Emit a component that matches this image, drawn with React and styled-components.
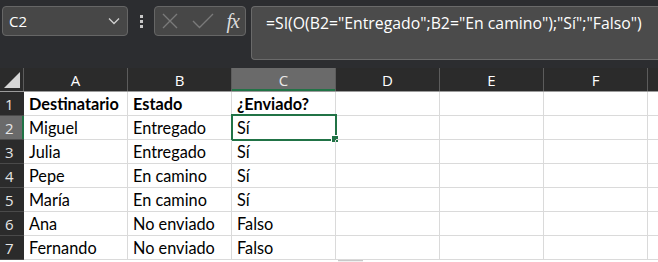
import React from 'react';
import styled, { createGlobalStyle } from 'styled-components';

const GlobalStyle = createGlobalStyle`
  html, body {
    margin: 0;
    padding: 0;
    background: #ffffff;
    overflow: hidden;
  }
`;

const Page = styled.div`
  width: 658px;
  height: 262px;
  overflow: hidden;
  font-family: 'Open Sans', 'Noto Sans', sans-serif;
`;

const Toolbar = styled.div`
  height: 68px;
  background: #2c2d30;
  display: flex;
  align-items: flex-start;
  padding: 6px 0 0 2px;
  box-sizing: border-box;
`;

const NameBox = styled.div`
  width: 126px;
  height: 30px;
  box-sizing: border-box;
  border: 1px solid #666;
  border-radius: 4px;
  background: #474747;
  display: flex;
  align-items: center;
  justify-content: space-between;
  padding: 0 7px 0 6px;
  color: #fff;
  font-size: 15px;
`;

const Dots = styled.div`
  width: 26px;
  height: 30px;
  display: flex;
  flex-direction: column;
  align-items: center;
  justify-content: center;
  gap: 2px;
  span {
    width: 3px;
    height: 3px;
    background: #c8c8c8;
  }
`;

const FxBox = styled.div`
  width: 92px;
  height: 30px;
  box-sizing: border-box;
  border: 1px solid #666;
  border-radius: 4px;
  background: #474747;
  display: flex;
  align-items: center;
  justify-content: space-between;
  padding: 0 4px 0 6px;
  margin-right: 5px;
`;

const FxLabel = styled.span`
  font-family: 'Liberation Serif', 'DejaVu Serif', serif;
  font-style: italic;
  font-size: 20px;
  color: #dcdcdc;
  letter-spacing: -1px;
  padding-right: 2px;
`;

const FormulaBox = styled.div`
  flex: 1;
  height: 54px;
  box-sizing: border-box;
  border: 1px solid #6a6a6a;
  border-right: none;
  border-radius: 4px 0 0 4px;
  background: #4b4b4b;
  color: #fff;
  font-size: 15.8px;
  padding: 5px 0 0 14px;
  white-space: nowrap;
`;

const Row = styled.div`
  display: flex;
  height: 24px;
`;

const HeaderRow = styled(Row)`
  height: 23px;
  background: #2b2b2b;
  border-bottom: 1px solid #9b9b9b;
`;

const Corner = styled.div`
  width: 24px;
  height: 23px;
  box-sizing: border-box;
  border-right: 1px solid #5c5c5c;
  svg { display: block; }
`;

const ColHead = styled.div`
  width: 104px;
  flex: none;
  box-sizing: border-box;
  border-right: 1px solid #5c5c5c;
  display: flex;
  align-items: center;
  justify-content: center;
  color: ${p => (p.$active ? '#e8e8e8' : '#ffffff')};
  background: ${p => (p.$active ? '#6a6a6a' : 'transparent')};
  box-shadow: ${p => (p.$active ? 'inset 0 -2px 0 #217346' : 'none')};
  font-size: 15px;
  padding-top: 1px;
`;

const RowHead = styled.div`
  width: 24px;
  flex: none;
  box-sizing: border-box;
  background: ${p => (p.$active ? '#6a6a6a' : '#2b2b2b')};
  box-shadow: ${p => (p.$active ? 'inset -2px 0 0 #217346' : 'none')};
  border-bottom: 1px solid #4a4a4a;
  color: #e6e6e6;
  font-size: 15px;
  padding-left: 5px;
  display: flex;
  align-items: center;
`;

const Cell = styled.div`
  width: 104px;
  flex: none;
  box-sizing: border-box;
  border-right: 1px solid #dadada;
  border-bottom: 1px solid #dadada;
  color: #000;
  font-family: 'Lato', 'Liberation Sans', sans-serif;
  font-size: 16.3px;
  font-weight: ${p => (p.$bold ? 700 : 400)};
  padding: 2px 0 0 5px;
  white-space: nowrap;
  position: relative;
`;

const Selection = styled.div`
  position: absolute;
  left: -1px;
  top: -2px;
  right: -2px;
  bottom: -2px;
  border: 2px solid #217346;
  pointer-events: none;
  &::after {
    content: '';
    position: absolute;
    right: -4px;
    bottom: -4px;
    width: 6px;
    height: 6px;
    background: #217346;
    border: 1px solid #fff;
  }
`;

const Scrollbar = styled.div`
  height: 3px;
  display: flex;
  padding-left: 338px;
  span {
    width: 25px;
    border-top: 1px solid #c8c8c8;
    background: #f0f0f0;
  }
`;

const columns = ['A', 'B', 'C', 'D', 'E', 'F'];

const rows = [
  ['Destinatario', 'Estado', '¿Enviado?'],
  ['Miguel', 'Entregado', 'Sí'],
  ['Julia', 'Entregado', 'Sí'],
  ['Pepe', 'En camino', 'Sí'],
  ['María', 'En camino', 'Sí'],
  ['Ana', 'No enviado', 'Falso'],
  ['Fernando', 'No enviado', 'Falso'],
];

const Chevron = () => (
  <svg width="12" height="8" viewBox="0 0 12 8">
    <path d="M1 1.5 L6 6.5 L11 1.5" fill="none" stroke="#d0d0d0" strokeWidth="1.3" />
  </svg>
);

const CrossIcon = () => (
  <svg width="18" height="18" viewBox="0 0 18 18">
    <path d="M2 2 L16 16 M16 2 L2 16" stroke="#7a7a7a" strokeWidth="1.4" />
  </svg>
);

const CheckIcon = () => (
  <svg width="22" height="18" viewBox="0 0 22 18">
    <path d="M1 9 L7.5 15.5 L21 2" fill="none" stroke="#7a7a7a" strokeWidth="1.4" />
  </svg>
);

export default function App() {
  return (
    <Page>
      <GlobalStyle />
      <Toolbar>
        <NameBox>
          <span>C2</span>
          <Chevron />
        </NameBox>
        <Dots>
          <span />
          <span />
          <span />
        </Dots>
        <FxBox>
          <CrossIcon />
          <CheckIcon />
          <FxLabel>fx</FxLabel>
        </FxBox>
        <FormulaBox>=SI(O(B2="Entregado";B2="En camino");"Sí";"Falso")</FormulaBox>
      </Toolbar>
      <HeaderRow>
        <Corner>
          <svg width="23" height="23" viewBox="0 0 23 23">
            <polygon points="20,4 20,20 4,20" fill="#d6d6d6" />
          </svg>
        </Corner>
        {columns.map(c => (
          <ColHead key={c} $active={c === 'C'}>{c}</ColHead>
        ))}
        <ColHead />
      </HeaderRow>
      {rows.map((r, i) => (
        <Row key={i}>
          <RowHead $active={i === 1}>{i + 1}</RowHead>
          {columns.map((c, j) => (
            <Cell key={c} $bold={i === 0}>
              {r[j] || ''}
              {i === 1 && c === 'C' && <Selection />}
            </Cell>
          ))}
          <Cell />
        </Row>
      ))}
      <Scrollbar>
        <span />
      </Scrollbar>
    </Page>
  );
}
